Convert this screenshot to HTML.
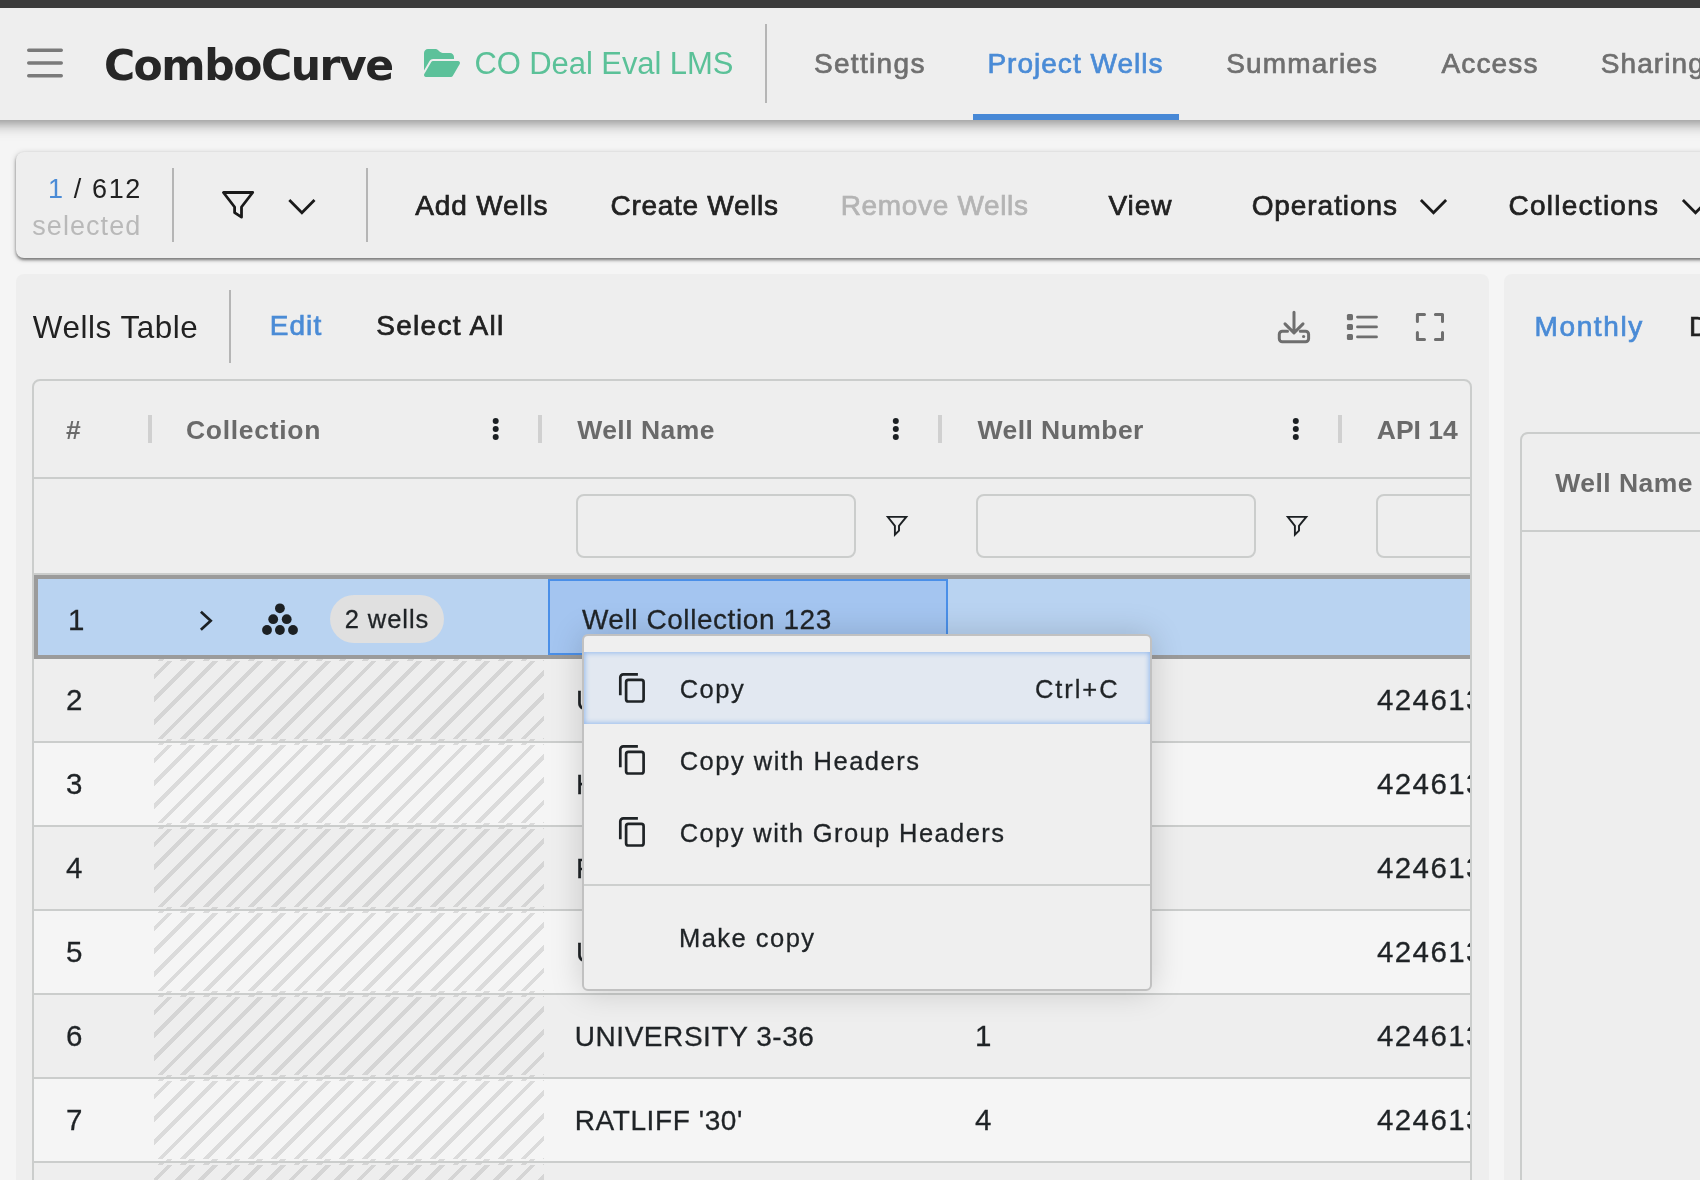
<!DOCTYPE html>
<html><head><meta charset="utf-8"><title>ComboCurve - Project Wells</title>
<style>
*{box-sizing:border-box;margin:0;padding:0}
html,body{width:1700px;height:1180px;overflow:hidden;background:#f5f5f5}
body{position:relative;font-family:"Liberation Sans",sans-serif}
.a{position:absolute}
.t{position:absolute;white-space:pre;line-height:normal}
svg{position:absolute;overflow:visible}
.card{position:absolute;background:#eee;border-radius:8px}
.vd{position:absolute;width:2px;background:#b5b5b5}
.sep{position:absolute;width:4px;height:28px;top:415px;background:#d0d0d0}
.hl{position:absolute;height:2px;background:#cbcdcc}
.inp{position:absolute;height:64px;top:494px;border:2px solid #cbcdcc;border-radius:8px;background:#eee}
.row{position:absolute;left:34px;width:1437px;height:84px}
.hatch{position:absolute;left:120px;width:390px;top:0;height:82px;border-top:2px solid transparent;border-bottom:2px solid transparent;background:repeating-linear-gradient(135deg,rgba(0,0,0,0) 0 9.2px,rgba(0,0,0,.105) 9.2px 13.2px,rgba(0,0,0,0) 13.2px 16.050px)}
.num{-webkit-text-stroke:.3px #1f2326;will-change:transform;position:absolute;left:32px;font-size:29.5px;margin-top:-2px;color:#1f2326;line-height:normal}
.api{-webkit-text-stroke:.3px #1f2326;will-change:transform;position:absolute;left:1342.7px;font-size:29.5px;margin-top:-2px;color:#1f2326;white-space:pre;letter-spacing:1.4px}
.wn{-webkit-text-stroke:.3px #1f2326;will-change:transform;position:absolute;font-size:28px;color:#1f2326;white-space:pre}
</style></head><body>
<!-- top bar + header -->
<div class="a" style="left:-40px;top:0;width:1780px;height:120px;background:#eee;box-shadow:0 4px 8px -2px rgba(0,0,0,.2),0 8px 10px rgba(0,0,0,.14),0 2px 20px rgba(0,0,0,.12)"></div>
<div class="a" style="left:0;top:0;width:1700px;height:8px;background:#3b3b3b"></div>
<svg style="left:0;top:0" width="1700" height="130">
<g stroke="#7a7a7a" stroke-width="3.4" stroke-linecap="round"><path d="M28.7 50.2H61.3M28.7 63H61.3M28.7 75.8H61.3"/></g>
<g transform="translate(424,47) scale(0.0625)" fill="#5cc19a"><path d="M88.700 223.800L0 375.800V96C0 60.700 28.700 32 64 32H181.500c17 0 33.300 6.700 45.300 18.700l26.500 26.500c12 12 28.300 18.700 45.300 18.700H416c35.300 0 64 28.700 64 64v32H144c-22.800 0-43.800 12.100-55.300 31.800zm27.600 16.100C122.100 230 132.600 224 144 224H544c11.500 0 22 6.100 27.700 16.100s5.700 22.200-.1 32.100l-112 192C453.900 474 443.400 480 432 480H32c-11.500 0-22-6.100-27.700-16.100s-5.700-22.200 .1-32.100l112-192z"/></g>
</svg>
<div class="vd" style="left:765px;top:24px;height:79px"></div>
<div class="a" style="left:973px;top:114px;width:206px;height:6px;background:#4788d6"></div>

<!-- toolbar card -->
<div class="card" style="left:16px;top:151.5px;width:1720px;height:106px;box-shadow:0 2px 3px rgba(0,0,0,.45),0 1px 6px rgba(0,0,0,.18)"></div>
<div class="vd" style="left:172px;top:168px;height:74px"></div>
<div class="vd" style="left:366px;top:168px;height:74px"></div>
<svg style="left:0;top:0" width="1700" height="260"><g fill="none" stroke="#1a1a1a" stroke-width="2.8">
<path stroke-linejoin="round" d="M223.400 192.500H252.700L241.500 207V217.200L234.600 212.600V207Z"/>
<path d="M289.300 200L301.900 212.700L314.500 200"/>
<path d="M1420.900 200L1433.500 212.700L1446.100 200"/>
<path d="M1682.900 200L1695.500 212.700L1708.100 200"/>
</g></svg>

<!-- wells table card -->
<div class="card" style="left:16px;top:274px;width:1472.500px;height:940px"></div>
<div class="card" style="left:1503.500px;top:274px;width:260px;height:940px"></div>
<div class="vd" style="left:229px;top:290px;height:72.500px"></div>
<svg style="left:0;top:0" width="1700" height="360"><g fill="none" stroke="#6e6e6e" stroke-width="3" stroke-linecap="round" stroke-linejoin="round">
<path d="M1294 312.300V332.500M1285 323.900L1294 332.900L1303 323.900"/>
<path d="M1287.500 331.300H1282.300a3 3 0 0 0-3 3V338.700a3 3 0 0 0 3 3H1305.600a3 3 0 0 0 3-3V334.300a3 3 0 0 0-3-3H1300.300"/>
<path stroke-width="2.800" d="M1357.500 317.100H1376.500M1357.500 326.900H1376.500M1357.500 336.900H1376.500"/>
<path stroke-width="3" d="M1417.400 321.600V314.500H1424.500M1435.400 314.500H1442.500V321.600M1442.500 332.400V339.500H1435.400M1424.500 339.500H1417.400V332.400"/>
</g><g fill="#6e6e6e"><circle cx="1303.600" cy="336.500" r="1.600"/>
<rect x="1346.900" y="314.100" width="6.100" height="6.100" rx="1.500"/><rect x="1346.900" y="323.900" width="6.100" height="6.100" rx="1.500"/><rect x="1346.900" y="333.900" width="6.100" height="6.100" rx="1.500"/></g></svg>

<!-- right panel inner grid -->
<div class="a" style="left:1520px;top:432px;width:260px;height:800px;border:2px solid #cbcdcc;border-radius:8px"></div>
<div class="hl" style="left:1522px;width:200px;top:530px"></div>

<!-- grid -->
<div class="a" id="grid" style="left:32px;top:379px;width:1440px;height:830px;border:2px solid #cbcdcc;border-radius:8px;overflow:hidden">
</div>
<div class="a" style="left:34px;top:381px;width:1436px;height:820px;overflow:hidden">
 <div class="a" style="left:-34px;top:-381px;width:1700px;height:1180px">
  <div class="hl" style="left:34px;width:1437px;top:477px"></div>
  <div class="sep" style="left:148px"></div><div class="sep" style="left:538px"></div><div class="sep" style="left:938px"></div><div class="sep" style="left:1338px"></div>
  <div class="inp" style="left:576px;width:280px"></div><div class="inp" style="left:976px;width:280px"></div><div class="inp" style="left:1376px;width:280px"></div>
  <div class="row" style="top:659px;background:#eee"><div class="hatch"></div><span class="num" style="top:26px">2</span><span class="wn" style="left:541.5px;top:26px">UNIVERSITY 3-35</span><span class="wn" style="left:941px;top:26px;font-size:29.5px;margin-top:-2px">1</span><span class="api" style="top:26px">42461339350000</span></div>
<div class="hl" style="left:34px;width:1437px;top:741px"></div><div class="row" style="top:743px;background:#f5f5f5"><div class="hatch"></div><span class="num" style="top:26px">3</span><span class="wn" style="left:541.5px;top:26px">HALFF '14'</span><span class="wn" style="left:941px;top:26px;font-size:29.5px;margin-top:-2px">2</span><span class="api" style="top:26px">42461339350000</span></div>
<div class="hl" style="left:34px;width:1437px;top:825px"></div><div class="row" style="top:827px;background:#eee"><div class="hatch"></div><span class="num" style="top:26px">4</span><span class="wn" style="left:541.5px;top:26px">RATLIFF '29'</span><span class="wn" style="left:941px;top:26px;font-size:29.5px;margin-top:-2px">3</span><span class="api" style="top:26px">42461339350000</span></div>
<div class="hl" style="left:34px;width:1437px;top:909px"></div><div class="row" style="top:911px;background:#f5f5f5"><div class="hatch"></div><span class="num" style="top:26px">5</span><span class="wn" style="left:541.5px;top:26px">UNIVERSITY 3-37</span><span class="wn" style="left:941px;top:26px;font-size:29.5px;margin-top:-2px">2</span><span class="api" style="top:26px">42461339350000</span></div>
<div class="hl" style="left:34px;width:1437px;top:993px"></div><div class="row" style="top:995px;background:#eee"><div class="hatch"></div><span class="num" style="top:26px">6</span><span class="wn" style="left:541.5px;top:26px"></span><span class="wn" style="left:941px;top:26px;font-size:29.5px;margin-top:-2px">1</span><span class="api" style="top:26px">42461339350000</span></div>
<div class="hl" style="left:34px;width:1437px;top:1077px"></div><div class="row" style="top:1079px;background:#f5f5f5"><div class="hatch"></div><span class="num" style="top:26px">7</span><span class="wn" style="left:541.5px;top:26px"></span><span class="wn" style="left:941px;top:26px;font-size:29.5px;margin-top:-2px">4</span><span class="api" style="top:26px">42461339350000</span></div>
<div class="hl" style="left:34px;width:1437px;top:1161px"></div><div class="row" style="top:1163px;background:#eee"><div class="hatch"></div><span class="num" style="top:26px">8</span><span class="wn" style="left:541.5px;top:26px"></span><span class="wn" style="left:941px;top:26px;font-size:29.5px;margin-top:-2px"></span><span class="api" style="top:26px">42461339350000</span></div>
<div class="hl" style="left:34px;width:1437px;top:1245px"></div>
  <div class="hl" style="left:34px;width:1437px;top:573px"></div>
  <!-- selected row -->
  <div class="a" style="left:34px;top:575px;width:1460px;height:84px;background:#b9d3f1;border:4px solid #9b9b9b;border-right:0"></div>
  <div class="a" style="left:548px;top:579px;width:400px;height:76px;background:#a4c5f0;border:2px solid #4a8fe8"></div>
  <div class="a" style="left:330px;top:595px;width:114px;height:48px;border-radius:24px;background:#e0e0e0"></div>
  <span class="num" style="left:68.300px;top:605px">1</span>
 </div>
</div>
<svg style="left:0;top:0" width="1700" height="660"><g fill="#1c2023">
<circle cx="495.700" cy="421" r="3"/><circle cx="495.700" cy="429" r="3"/><circle cx="495.700" cy="437" r="3"/>
<circle cx="895.800" cy="421" r="3"/><circle cx="895.800" cy="429" r="3"/><circle cx="895.800" cy="437" r="3"/>
<circle cx="1295.800" cy="421" r="3"/><circle cx="1295.800" cy="429" r="3"/><circle cx="1295.800" cy="437" r="3"/>
<circle cx="279.900" cy="608.300" r="4.900"/><circle cx="273.200" cy="619.200" r="4.900"/><circle cx="286.700" cy="619.200" r="4.900"/><circle cx="267" cy="630" r="4.900"/><circle cx="279.900" cy="630" r="4.900"/><circle cx="293" cy="630" r="4.900"/>
</g>
<g fill="none" stroke="#1c2023" stroke-width="1.900" stroke-linejoin="miter">
<path d="M887.800 516.900H906.300L899 525.800V530.600L894.900 534.700V525.800Z"/>
<path d="M1287.800 516.900H1306.300L1299 525.800V530.600L1294.900 534.700V525.800Z"/>
</g>
<path d="M200.900 611.700L210.700 620.700L200.900 629.700" fill="none" stroke="#1c2023" stroke-width="2.700"/>
</svg>

<!-- context menu -->
<div class="a" style="left:582px;top:634px;width:570px;height:357px;background:#efefef;border:2px solid #c1c1c1;border-radius:6px;box-shadow:0 0 32px rgba(0,0,0,.17)"></div>
<div class="a" style="left:584px;top:652px;width:566px;height:72px;background:#e2e8f1;box-shadow:inset 0 0 5px 1px rgba(96,155,235,.6)"></div>
<div class="hl" style="left:584px;width:566px;top:884px;background:#cdcfce"></div>
<svg style="left:0;top:0" width="1700" height="1180"><g fill="none" stroke="#1f2326" stroke-width="2.7" transform="translate(0,0)"><path d="M637.9 674.3H623.3a3 3 0 0 0-3 3V695.2"/><rect x="626.1" y="679.9" width="17.5" height="21.6" rx="2.3"/></g></svg><svg style="left:0;top:0" width="1700" height="1180"><g fill="none" stroke="#1f2326" stroke-width="2.7" transform="translate(0,72)"><path d="M637.9 674.3H623.3a3 3 0 0 0-3 3V695.2"/><rect x="626.1" y="679.9" width="17.5" height="21.6" rx="2.3"/></g></svg><svg style="left:0;top:0" width="1700" height="1180"><g fill="none" stroke="#1f2326" stroke-width="2.7" transform="translate(0,144)"><path d="M637.9 674.3H623.3a3 3 0 0 0-3 3V695.2"/><rect x="626.1" y="679.9" width="17.5" height="21.6" rx="2.3"/></g></svg>

<div class="a" style="left:0;top:0;width:1700px;height:1180px;will-change:transform">
<span class="t" style="left:103.88px;top:41.00px;font-size:42.5px;color:#262626;letter-spacing:-1.451px;font-weight:700;font-family:'DejaVu Sans',sans-serif;">ComboCurve</span>
<span class="t" style="left:474.43px;top:46.00px;font-size:31px;color:#5bc198;letter-spacing:-0.076px;">CO Deal Eval LMS</span>
<span class="t" style="left:813.93px;top:48.40px;font-size:28px;color:#6f6f6f;letter-spacing:1.330px;-webkit-text-stroke:0.7px #6f6f6f;">Settings</span>
<span class="t" style="left:987.40px;top:48.40px;font-size:28px;color:#4a8bd6;letter-spacing:1.021px;-webkit-text-stroke:0.7px #4a8bd6;">Project Wells</span>
<span class="t" style="left:1226.23px;top:48.40px;font-size:28px;color:#6f6f6f;letter-spacing:1.149px;-webkit-text-stroke:0.7px #6f6f6f;">Summaries</span>
<span class="t" style="left:1441.45px;top:48.40px;font-size:28px;color:#6f6f6f;letter-spacing:1.163px;-webkit-text-stroke:0.7px #6f6f6f;">Access</span>
<span class="t" style="left:1600.73px;top:48.40px;font-size:28px;color:#6f6f6f;letter-spacing:1.093px;-webkit-text-stroke:0.7px #6f6f6f;">Sharing</span>
<span class="t" style="left:47.94px;top:173.50px;font-size:27px;color:#212121;letter-spacing:1.639px;"><span style="color:#4a8bd6">1</span> / 612</span>
<span class="t" style="left:32.25px;top:210.50px;font-size:27px;color:#b9b9b9;letter-spacing:1.059px;">selected</span>
<span class="t" style="left:415.25px;top:190.20px;font-size:28px;color:#212121;letter-spacing:0.840px;-webkit-text-stroke:0.7px #212121;">Add Wells</span>
<span class="t" style="left:610.58px;top:190.20px;font-size:28px;color:#212121;letter-spacing:0.697px;-webkit-text-stroke:0.7px #212121;">Create Wells</span>
<span class="t" style="left:840.70px;top:190.20px;font-size:28px;color:#b4b4b4;letter-spacing:0.666px;-webkit-text-stroke:0.7px #b4b4b4;">Remove Wells</span>
<span class="t" style="left:1108.38px;top:190.20px;font-size:28px;color:#212121;letter-spacing:0.989px;-webkit-text-stroke:0.7px #212121;">View</span>
<span class="t" style="left:1251.67px;top:190.20px;font-size:28px;color:#212121;letter-spacing:0.930px;-webkit-text-stroke:0.7px #212121;">Operations</span>
<span class="t" style="left:1508.58px;top:190.20px;font-size:28px;color:#212121;letter-spacing:1.248px;-webkit-text-stroke:0.7px #212121;">Collections</span>
<span class="t" style="left:32.86px;top:310.00px;font-size:31.4px;color:#212121;letter-spacing:0.547px;">Wells Table</span>
<span class="t" style="left:269.70px;top:310.40px;font-size:28px;color:#4a8bd6;letter-spacing:1.084px;-webkit-text-stroke:0.7px #4a8bd6;">Edit</span>
<span class="t" style="left:376.23px;top:310.40px;font-size:28px;color:#212121;letter-spacing:1.308px;-webkit-text-stroke:0.7px #212121;">Select All</span>
<span class="t" style="left:1534.50px;top:311.20px;font-size:28px;color:#4a8bd6;letter-spacing:1.634px;-webkit-text-stroke:0.7px #4a8bd6;">Monthly</span>
<span class="t" style="left:1689.00px;top:311.20px;font-size:28px;color:#212121;letter-spacing:0.204px;-webkit-text-stroke:0.7px #212121;">Daily</span>
<span class="t" style="left:65.95px;top:415.20px;font-size:26.5px;color:#6a6a6a;letter-spacing:0.000px;font-weight:700;">#</span>
<span class="t" style="left:185.91px;top:415.20px;font-size:26.5px;color:#6a6a6a;letter-spacing:0.715px;font-weight:700;">Collection</span>
<span class="t" style="left:577.17px;top:415.20px;font-size:26.5px;color:#6a6a6a;letter-spacing:0.473px;font-weight:700;">Well Name</span>
<span class="t" style="left:977.47px;top:415.20px;font-size:26.5px;color:#6a6a6a;letter-spacing:0.444px;font-weight:700;">Well Number</span>
<span class="t" style="left:1376.84px;top:415.20px;font-size:26.5px;color:#6a6a6a;letter-spacing:-0.043px;font-weight:700;">API 14</span>
<span class="t" style="left:1555.27px;top:467.90px;font-size:26.5px;color:#6a6a6a;letter-spacing:0.473px;font-weight:700;">Well Name</span>
<span class="t" style="left:581.88px;top:604.00px;font-size:28px;color:#1f2326;letter-spacing:0.566px;-webkit-text-stroke:0.3px #1f2326;">Well Collection 123</span>
<span class="t" style="left:344.72px;top:604.60px;font-size:25.5px;color:#1f2326;letter-spacing:0.942px;-webkit-text-stroke:0.3px #1f2326;">2 wells</span>
<span class="t" style="left:574.74px;top:1021.00px;font-size:28px;color:#1f2326;letter-spacing:0.560px;-webkit-text-stroke:0.3px #1f2326;">UNIVERSITY 3-36</span>
<span class="t" style="left:574.70px;top:1105.00px;font-size:28px;color:#1f2326;letter-spacing:0.600px;-webkit-text-stroke:0.3px #1f2326;">RATLIFF '30'</span>
<span class="t" style="left:679.71px;top:674.80px;font-size:25.5px;color:#1f2326;letter-spacing:1.504px;-webkit-text-stroke:0.3px #1f2326;">Copy</span>
<span class="t" style="left:1035.01px;top:674.80px;font-size:25.5px;color:#1f2326;letter-spacing:1.919px;-webkit-text-stroke:0.3px #1f2326;">Ctrl+C</span>
<span class="t" style="left:679.71px;top:746.60px;font-size:25.5px;color:#1f2326;letter-spacing:1.486px;-webkit-text-stroke:0.3px #1f2326;">Copy with Headers</span>
<span class="t" style="left:679.71px;top:818.80px;font-size:25.5px;color:#1f2326;letter-spacing:1.401px;-webkit-text-stroke:0.3px #1f2326;">Copy with Group Headers</span>
<span class="t" style="left:678.91px;top:924.40px;font-size:25.5px;color:#1f2326;letter-spacing:1.479px;-webkit-text-stroke:0.3px #1f2326;">Make copy</span>
</div>
</body></html>
